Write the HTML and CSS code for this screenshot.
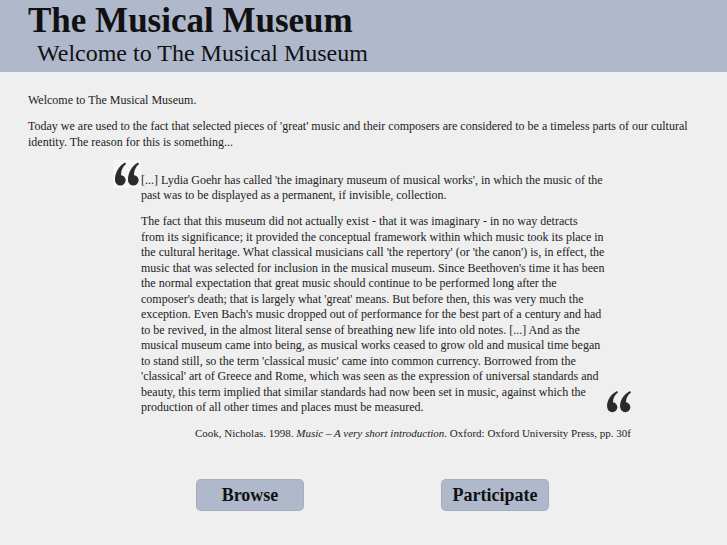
FILE: index.html
```html
<!DOCTYPE html>
<html>
<head>
<meta charset="utf-8">
<link rel="stylesheet" href="styles.css">
<title>The Musical Museum</title>
</head>
<body>
<header class="masthead">
  <h1 class="site-title">The Musical Museum</h1>
  <h2 class="site-subtitle">Welcome to The Musical Museum</h2>
</header>
<main class="content">
  <p>Welcome to The Musical Museum.</p>
  <p>Today we are used to the fact that selected pieces of 'great' music and their composers are considered to be a timeless parts of our cultural identity. The reason for this is something...</p>
  <div class="quote">
    <svg class="quote-open" viewBox="0 0 28 28" width="28" height="28" aria-hidden="true">
      <g fill="#2b2b2b">
        <path d="M2,20 C2,12.5 5.5,6.5 12,2.5 L13,4 C9.5,7 8,10.5 8,15 Z"/>
        <circle cx="7.3" cy="20.2" r="5.3"/>
        <path d="M15,20 C15,12.5 18.5,6.5 25,2.5 L26,4 C22.5,7 21,10.5 21,15 Z"/>
        <circle cx="20.3" cy="20.2" r="5.3"/>
      </g>
    </svg>
    <div class="quote-body">
      <p>[...] Lydia Goehr has called 'the imaginary museum of musical works', in which the music of the past was to be displayed as a permanent, if invisible, collection.</p>
      <p>The fact that this museum did not actually exist - that it was imaginary - in no way detracts<br>from its significance; it provided the conceptual framework within which music took its place in the cultural heritage. What classical musicians call 'the repertory' (or 'the canon') is, in effect, the music that was selected for inclusion in the musical museum. Since Beethoven's time it has been the normal expectation that great music should continue to be performed long after the composer's death; that is largely what 'great' means. But before then, this was very much the exception. Even Bach's music dropped out of performance for the best part of a century and had to be revived, in the almost literal sense of breathing new life into old notes. [...] And as the musical museum came into being, as musical works ceased to grow old and musical time began to stand still, so the term 'classical music' came into common currency. Borrowed from the 'classical' art of Greece and Rome, which was seen as the expression of universal standards and beauty, this term implied that similar standards had now been set in music, against which the production of all other times and places must be measured.</p>
    </div>
    <svg class="quote-close" viewBox="0 0 28 24" width="28" height="24" aria-hidden="true">
      <g fill="#2b2b2b">
        <path d="M2,17 C2,10 5.5,4.5 12,1 L13,2.5 C9.5,5 8,8.5 8,12.5 Z"/>
        <circle cx="7.3" cy="17.3" r="5"/>
        <path d="M15,17 C15,10 18.5,4.5 25,1 L26,2.5 C22.5,5 21,8.5 21,12.5 Z"/>
        <circle cx="20.3" cy="17.3" r="5"/>
      </g>
    </svg>
  </div>
  <p class="citation">Cook, Nicholas. 1998. <em>Music – A very short introduction</em>. Oxford: Oxford University Press, pp. 30f</p>
  <nav class="actions">
    <a class="button" href="#">Browse</a>
    <a class="button" href="#">Participate</a>
  </nav>
</main>
</body>
</html>
```
FILE: styles.css
```css
html, body {
  margin: 0;
  padding: 0;
}
body {
  background: #efefef;
  color: #222;
  font-family: "Liberation Serif", "Times New Roman", serif;
  width: 727px;
  height: 545px;
  overflow: hidden;
}
.masthead {
  background: #b0b8cc;
  height: 72px;
  padding: 0 0 0 28px;
  box-sizing: border-box;
  overflow: hidden;
}
.site-title {
  margin: 0;
  padding-top: 3px;
  font-size: 35px;
  line-height: 36px;
  font-weight: bold;
  color: #111;
}
.site-subtitle {
  margin: 0;
  padding-left: 9px;
  font-size: 24px;
  line-height: 28px;
  font-weight: normal;
  color: #111;
}
.content {
  padding: 21px 28px 0 28px;
  font-size: 12px;
  line-height: 15.5px;
}
.content p {
  margin: 0 0 10.5px 0;
}
.quote {
  display: grid;
  grid-template-columns: 28px 464px 28px;
  margin: 0 0 0 85px;
}
.quote-open {
  display: block;
  background: #f6f6f6;
  align-self: start;
  margin-top: -1px;
}
.quote-body {
  padding-top: 12px;
}
.quote-body p:last-child {
  margin-bottom: 0;
}
.quote-close {
  display: block;
  align-self: end;
  margin-bottom: 2px;
}
.content .citation {
  width: 603px;
  text-align: right;
  font-size: 11px;
  margin: 10px 0 0 0;
}
.actions {
  display: flex;
  gap: 137px;
  margin: 38px 0 0 168px;
}
.button {
  display: block;
  width: 108px;
  height: 32px;
  box-sizing: border-box;
  background: #b0b8cc;
  border: 1px dotted #9aa2b6;
  border-radius: 5px;
  color: #111;
  font-size: 18px;
  font-weight: bold;
  line-height: 30px;
  text-align: center;
  text-decoration: none;
}
```
